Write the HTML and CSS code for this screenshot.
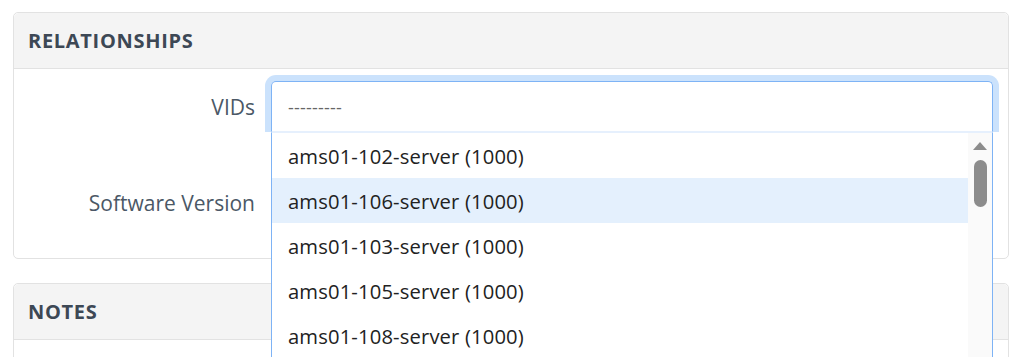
FILE: index.html
```html
<!DOCTYPE html>
<html lang="en">
<head>
  <meta charset="UTF-8">
  <meta name="viewport" content="width=device-width, initial-scale=1.0">
  <title>Edit Device</title>
  <link rel="stylesheet" href="styles.css">
</head>
<body>
  <div class="page">
    <div class="panel">
      <div class="panel-heading">Relationships</div>
      <div class="panel-body">
        <div class="form-row">
          <label class="form-label" for="vids">VIDs</label>
          <div class="field">
            <div class="select open" id="vids">
              <span class="select-value">---------</span>
            </div>
            <!-- open dropdown, drawn over the rest of the form -->
            <div class="dropdown">
              <ul class="options">
                <li>ams01-102-server (1000)</li>
                <li class="active">ams01-106-server (1000)</li>
                <li>ams01-103-server (1000)</li>
                <li>ams01-105-server (1000)</li>
                <li>ams01-108-server (1000)</li>
              </ul>
              <div class="scrollbar">
                <span class="arrow-up"></span>
                <span class="thumb"></span>
              </div>
            </div>
          </div>
        </div>
        <div class="form-row second">
          <label class="form-label" for="software">Software Version</label>
          <div class="field">
            <div class="select" id="software"></div>
          </div>
        </div>
      </div>
    </div>

    <div class="panel">
      <div class="panel-heading">Notes</div>
      <div class="panel-body"></div>
    </div>
  </div>
</body>
</html>
```

FILE: styles.css
```css
:root {
  --border: #e2e2e2;
  --heading-bg: #f4f4f4;
  --label: #4b5866;
  --focus: #7eb3f5;
  --focus-ring: #cbe2fc;
  --radius: 5px;
}
* { box-sizing: border-box; }
html, body {
  height: 100%;
  overflow: hidden;
}
body {
  margin: 0;
  font-family: "Open Sans", "Noto Sans", sans-serif;
  font-size: 20px;
  color: #222;
  background: #fff;
}
.page {
  padding: 12px 15px 0 13px;
}
.panel {
  border: 1px solid var(--border);
  border-radius: var(--radius);
  margin-bottom: 24px;
  background: #fff;
}
.panel-heading {
  height: 56px;
  display: flex;
  align-items: center;
  padding: 0 14px;
  background: var(--heading-bg);
  border-bottom: 1px solid var(--border);
  border-radius: var(--radius) var(--radius) 0 0;
  font-weight: bold;
  font-size: 20px;
  letter-spacing: 0.7px;
  text-transform: uppercase;
  color: #3d4855;
}
.panel-body {
  padding: 12px 15px 32px 0;
}
.form-row {
  display: grid;
  grid-template-columns: 241px 1fr;
  column-gap: 16px;
  align-items: center;
}
.form-row.second {
  margin-top: 48px;
}
.form-label {
  text-align: right;
  font-size: 21px;
  color: var(--label);
}
.field {
  position: relative;
}
.select {
  height: 51px;
  border: 1px solid #cfd4da;
  border-radius: var(--radius);
  display: flex;
  align-items: center;
  padding: 0 16px;
}
.form-row.second .select {
  height: 46px;
}
.select.open {
  border-color: var(--focus);
  border-bottom-color: #e6f0fd;
  border-radius: var(--radius) var(--radius) 0 0;
  box-shadow: 0 0 0 6px var(--focus-ring);
  clip-path: inset(-7px -7px 0 -7px);
}
.select-value {
  color: #666;
  font-size: 18px;
  letter-spacing: 0.2px;
}
.dropdown {
  position: absolute;
  top: 51px;
  left: 0;
  right: 0;
  z-index: 10;
  display: flex;
  background: #fff;
  border: 1px solid var(--focus);
  border-top: 1px solid #e6f0fd;
  border-bottom: none;
}
.options {
  list-style: none;
  margin: 0;
  padding: 0;
  flex: 1;
}
.options li {
  height: 45px;
  display: flex;
  align-items: center;
  padding: 0 16px;
  font-size: 20.2px;
  letter-spacing: 0.15px;
  white-space: nowrap;
}
.options li.active {
  background: #e4f0fd;
}
.scrollbar {
  width: 24px;
  background: #fafafa;
  display: flex;
  flex-direction: column;
  align-items: center;
}
.arrow-up {
  margin-top: 9px;
  width: 0;
  height: 0;
  border-left: 7.5px solid transparent;
  border-right: 7.5px solid transparent;
  border-bottom: 8px solid #8c8c8c;
}
.thumb {
  margin-top: 10px;
  width: 13px;
  height: 47px;
  border-radius: 7px;
  background: #8c8c8c;
}
```
